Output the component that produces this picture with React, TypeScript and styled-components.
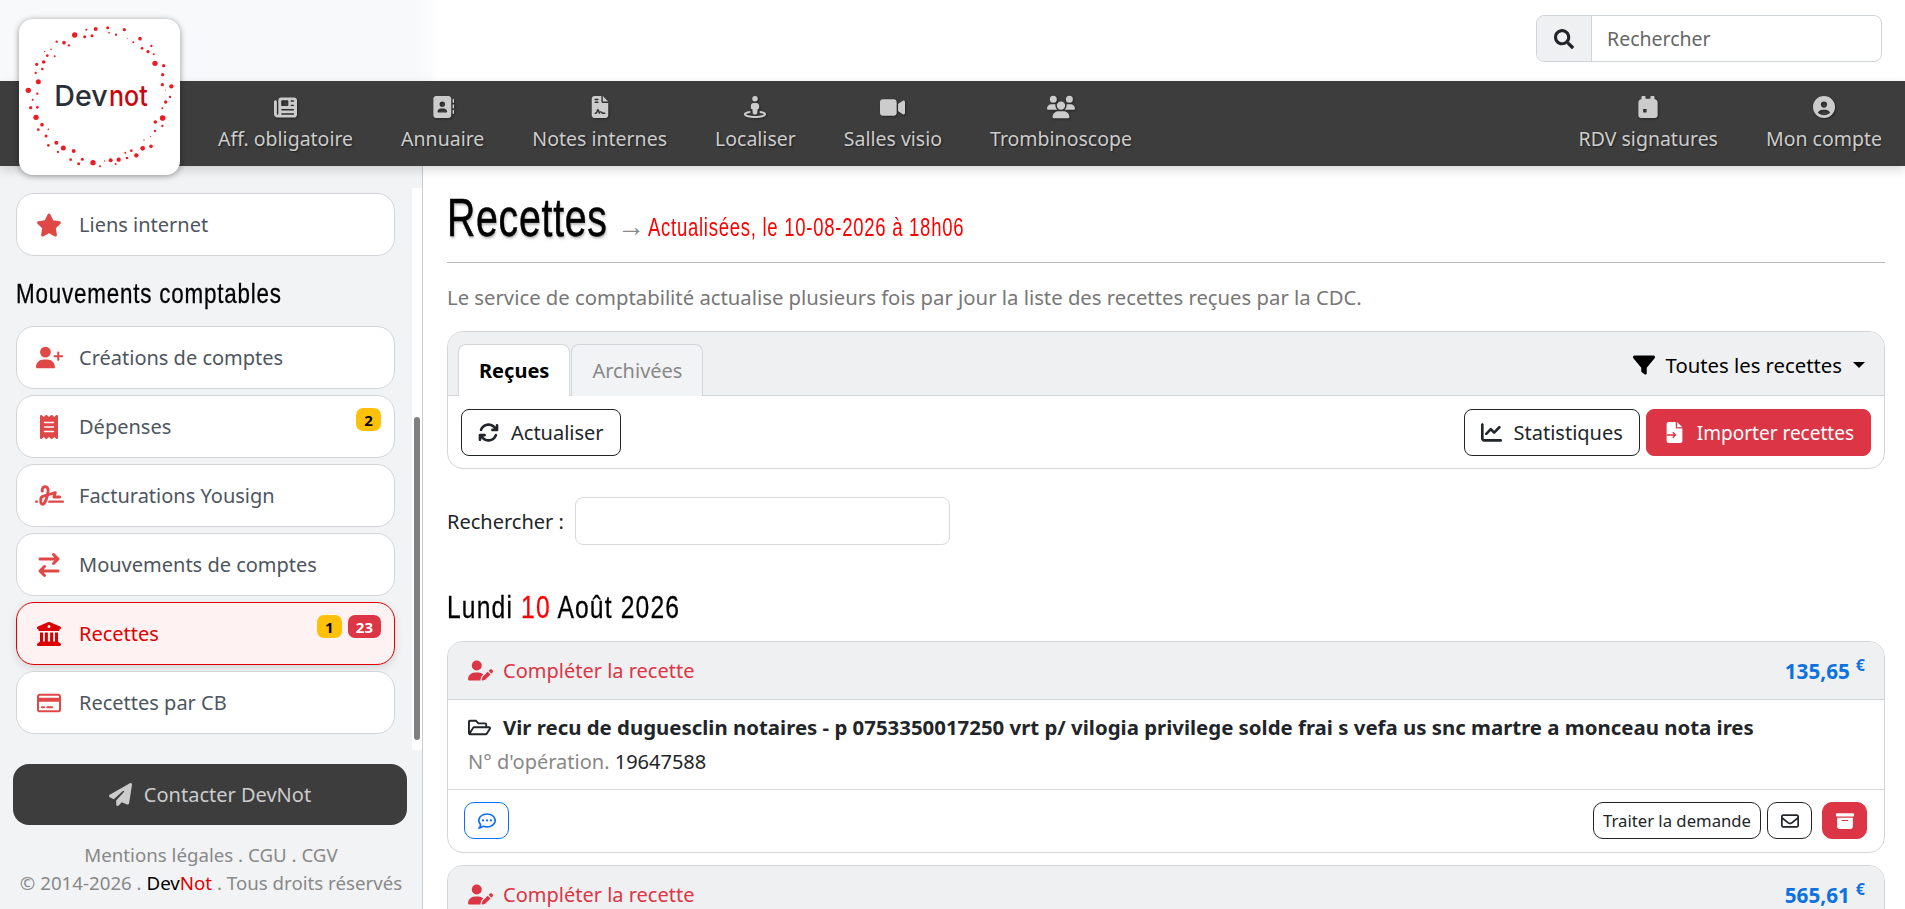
import React from 'react';
import styled, { createGlobalStyle } from 'styled-components';
import { FaRegFolderOpen, FaSearch } from 'react-icons/fa';
import {
  FaAddressBook, FaArrowRightArrowLeft, FaArrowsRotate, FaBoxArchive, FaBuildingColumns, FaChartLine, FaCircleUser,
  FaFileContract, FaFilter, FaNewspaper, FaPaperPlane, FaReceipt, FaRegCommentDots, FaRegCreditCard,
  FaRegEnvelope, FaSignature, FaStar, FaStreetView, FaUserPen, FaUserPlus, FaUsers, FaVideo,
} from 'react-icons/fa6';

const BODY_FONT = `"Noto Sans", "Open Sans", sans-serif`;
// no condensed face is installed: headings are Liberation Sans squeezed with scaleX
const HEAD_FONT = `"Liberation Sans", Arial, sans-serif`;

const GlobalStyle = createGlobalStyle`
  html, body { margin: 0; padding: 0; height: 100%; overflow: hidden; }
  * { box-sizing: border-box; }
  body { font-family: ${BODY_FONT}; font-size: 20px; color: #212529; background: #fff; }
`;

const Page = styled.div`
  position: relative;
  height: 909px;
  overflow: hidden;
  display: flex;
  flex-direction: column;
`;

const TopBar = styled.div`
  height: 81px;
  flex: none;
  display: flex;
  justify-content: flex-end;
  align-items: flex-start;
  padding: 15px 23px 0 0;
  background: linear-gradient(90deg, #f8f9fa 0, #f8f9fa 420px, #fff 440px);
`;

const SearchGroup = styled.div`
  width: 346px;
  height: 47px;
  display: flex;
  border: 1px solid #ced4da;
  border-radius: 8px;
  overflow: hidden;
`;

const SearchAddon = styled.div`
  width: 55px;
  display: flex;
  align-items: center;
  justify-content: center;
  background: #eff0f2;
  border-right: 1px solid #ced4da;
  color: #212529;
  font-size: 20px;
`;

const SearchText = styled.div`
  flex: 1;
  display: flex;
  align-items: center;
  padding-left: 15px;
  font-size: 19.5px;
  color: #666;
`;

const NavBar = styled.nav`
  height: 85px;
  flex: none;
  position: relative;
  z-index: 2;
  display: flex;
  justify-content: space-between;
  padding: 0 23px 0 218px;
  background: #3d3d3d;
  box-shadow: 0 4px 10px rgba(0, 0, 0, 0.15);
`;

const NavGroup = styled.div`
  display: flex;
  gap: 48px;
`;

const NavItem = styled.a`
  display: flex;
  flex-direction: column;
  align-items: center;
  font-size: 19.5px;
  line-height: 27px;
  color: #ccc;
  text-shadow: 1px 1px 2px rgba(0, 0, 0, 0.5);
  white-space: nowrap;
`;

const NavIcon = styled.span`
  height: 22px;
  margin: 15px 0 7px;
  display: flex;
  align-items: center;
  justify-content: center;
  svg { flex: none; filter: drop-shadow(1px 1px 1px rgba(0, 0, 0, 0.4)); }
`;

const LogoBox = styled.div`
  position: absolute;
  z-index: 3;
  left: 19px;
  top: 19px;
  width: 161px;
  height: 156px;
  background: #fff;
  border-radius: 14px;
  box-shadow: 0 1px 6px rgba(0, 0, 0, 0.4);
  svg { display: block; }
`;

const Body = styled.div`
  flex: 1;
  min-height: 0;
  display: flex;
`;

const Sidebar = styled.aside`
  width: 423px;
  flex: none;
  background: #f2f3f5;
  border-right: 1px solid #ccc;
`;

const ScrollArea = styled.div`
  height: 562px;
  margin-top: 22px;
  display: flex;
`;

const SideList = styled.div`
  flex: 1;
  padding: 5px 17px 0 16px;
  display: flex;
  flex-direction: column;
  gap: 6px;
`;

const ScrollTrack = styled.div`
  width: 10px;
  position: relative;
  background: #fff;
`;

const ScrollThumb = styled.div`
  position: absolute;
  left: 2px;
  top: 229px;
  width: 6px;
  height: 323px;
  border-radius: 3px;
  background: #808080;
`;

const SideTitle = styled.h4`
  margin: 12px 0 7px;
  height: 39px;
  line-height: 39px;
  font-family: ${HEAD_FONT};
  font-size: 28px;
  font-weight: 400;
  letter-spacing: 1px;
  color: #000;
  white-space: nowrap;
  transform: scaleX(0.8);
  transform-origin: left;
  -webkit-text-stroke: 0.3px #000;
`;

const SideItem = styled.a<{ $active?: boolean }>`
  position: relative;
  height: 63px;
  flex: none;
  display: flex;
  align-items: center;
  gap: 13px;
  padding-left: 15px;
  border-radius: 18px;
  border: 1px solid ${(p) => (p.$active ? '#dd0000' : '#d3d5d8')};
  background: ${(p) => (p.$active ? '#fff2f2' : '#fff')};
  box-shadow: ${(p) => (p.$active ? '0 3px 8px rgba(0, 0, 0, 0.12)' : 'none')};
  color: ${(p) => (p.$active ? '#dd0000' : '#4d5560')};
`;

const SideIcon = styled.span<{ $active?: boolean }>`
  width: 34px;
  display: flex;
  justify-content: center;
  color: ${(p) => (p.$active ? '#dd0000' : '#e04848')};
`;

const BadgeRow = styled.span`
  position: absolute;
  top: 12px;
  right: 13px;
  display: flex;
  gap: 6px;
`;

const Badge = styled.span<{ $tone: 'warn' | 'danger' }>`
  min-width: 25px;
  height: 23px;
  padding: 0 8px;
  display: flex;
  align-items: center;
  justify-content: center;
  border-radius: 7px;
  font-size: 15px;
  font-weight: 700;
  background: ${(p) => (p.$tone === 'warn' ? '#ffc107' : '#dc3545')};
  color: ${(p) => (p.$tone === 'warn' ? '#000' : '#fff')};
`;

const ContactButton = styled.a`
  height: 61px;
  margin: 14px 15px 0 13px;
  display: flex;
  align-items: center;
  justify-content: center;
  gap: 12px;
  border-radius: 16px;
  background: #3d3d3d;
  color: #ccc;
  svg { font-size: 23px; }
`;

const SideFooter = styled.div`
  margin-top: 16px;
  text-align: center;
  line-height: 28px;
  color: #888;
  font-size: 18.7px;
  white-space: nowrap;
  b { font-weight: 400; color: #000; }
  i { font-style: normal; color: #dd0000; }
`;

const Main = styled.main`
  flex: 1;
  min-width: 0;
  padding: 0 20px 0 24px;
`;

const TitleRow = styled.div`
  height: 97px;
  display: flex;
  align-items: baseline;
  padding-top: 21px;
  border-bottom: 1px solid #bbb;
`;

const Title = styled.h1`
  margin: 0;
  width: 160px;
  font-family: ${HEAD_FONT};
  font-size: 53px;
  font-weight: 400;
  letter-spacing: 1px;
  color: #000;
  white-space: nowrap;
  transform: scaleX(0.74);
  transform-origin: left;
  -webkit-text-stroke: 0.5px #000;
  text-shadow: 1px 2px 3px rgba(0, 0, 0, 0.3);
`;

const TitleArrow = styled.span`
  margin-left: 10px;
  width: 31px;
  font-size: 28px;
  line-height: 1;
  color: #888;
`;

const TitleNote = styled.small`
  font-family: ${HEAD_FONT};
  font-size: 25px;
  letter-spacing: 1px;
  color: #f00;
  white-space: nowrap;
  transform: scaleX(0.74);
  transform-origin: left;
`;

const Intro = styled.p`
  margin: 21px 0 0;
  line-height: 26px;
  font-size: 20.3px;
  color: #777;
  white-space: nowrap;
`;

const Panel = styled.section`
  margin-top: 21px;
  height: 138px;
  border: 1px solid #d3d5d8;
  border-radius: 16px;
  overflow: hidden;
`;

const PanelHead = styled.div`
  height: 64px;
  display: flex;
  justify-content: space-between;
  padding: 12px 19px 0 10px;
  background: #eff0f2;
  border-bottom: 1px solid #d3d5d8;
`;

const Tabs = styled.div`
  display: flex;
  gap: 1px;
`;

const Tab = styled.a<{ $active?: boolean }>`
  height: 52px;
  display: flex;
  align-items: center;
  padding: 0 20px;
  border: 1px solid #d3d5d8;
  border-bottom: 0;
  border-radius: 8px 8px 0 0;
  background: ${(p) => (p.$active ? '#fff' : '#f2f3f5')};
  color: ${(p) => (p.$active ? '#000' : '#888')};
  font-weight: ${(p) => (p.$active ? 700 : 400)};
`;

const FilterMenu = styled.div`
  display: flex;
  align-items: center;
  gap: 11px;
  height: 43px;
  margin-top: -1px;
  font-size: 20.3px;
  color: #000;
  svg { font-size: 22px; }
`;

const Caret = styled.span`
  width: 0;
  height: 0;
  border-left: 6px solid transparent;
  border-right: 6px solid transparent;
  border-top: 6px solid #000;
`;

const PanelBody = styled.div`
  height: 72px;
  display: flex;
  justify-content: space-between;
  padding: 13px 13px 0 13px;
`;

const ButtonGroup = styled.div`
  display: flex;
  gap: 6px;
`;

const Button = styled.a<{ $tone?: 'outline' | 'danger'; $small?: boolean; $info?: boolean; $square?: boolean }>`
  height: ${(p) => (p.$small ? 37 : 47)}px;
  width: ${(p) => (p.$square ? '45px' : 'auto')};
  display: flex;
  align-items: center;
  justify-content: center;
  gap: 12px;
  padding: 0 ${(p) => (p.$square ? 0 : p.$small ? 9 : 16)}px;
  border-radius: ${(p) => (p.$small ? 10 : 8)}px;
  border: 1px solid ${(p) => (p.$tone === 'danger' ? '#dc3545' : p.$info ? '#0d6efd' : '#212529')};
  background: ${(p) => (p.$tone === 'danger' ? '#dc3545' : '#fff')};
  color: ${(p) => (p.$tone === 'danger' ? '#fff' : p.$info ? '#0d6efd' : '#212529')};
  font-size: ${(p) => (p.$small ? 16.7 : 20)}px;
  white-space: nowrap;
  svg { font-size: ${(p) => (p.$small ? 18 : 21)}px; }
`;

const ImportButton = styled(Button)`
  gap: 14px;
  padding-left: 19px;
  font-size: 19px;
`;

const SearchRow = styled.div`
  margin-top: 28px;
  display: flex;
  align-items: center;
  gap: 11px;
`;

const SearchBox = styled.div`
  width: 375px;
  height: 48px;
  border: 1px solid #d8dade;
  border-radius: 8px;
`;

const DateHeading = styled.h3`
  margin: 40px 0 0;
  height: 44px;
  line-height: 44px;
  font-family: ${HEAD_FONT};
  font-size: 32px;
  font-weight: 400;
  letter-spacing: 1.5px;
  color: #000;
  white-space: nowrap;
  transform: scaleX(0.77);
  transform-origin: left;
  -webkit-text-stroke: 0.3px #000;
  span { color: #f00; -webkit-text-stroke: 0.3px #f00; }
`;

const CardList = styled.div`
  margin-top: 12px;
  display: flex;
  flex-direction: column;
  gap: 12px;
`;

const Card = styled.article`
  border: 1px solid #d3d5d8;
  border-radius: 16px;
  overflow: hidden;
`;

const CardHead = styled.header`
  height: 58px;
  display: flex;
  justify-content: space-between;
  align-items: center;
  padding: 0 19px 0 20px;
  background: #eff0f2;
  border-bottom: 1px solid #d3d5d8;
`;

const CardStatus = styled.span`
  display: flex;
  align-items: center;
  gap: 10px;
  color: #dc3545;
  svg { font-size: 25px; }
`;

const Amount = styled.span`
  font-weight: 700;
  font-size: 20.7px;
  color: #0b72e0;
  sup { font-size: 16px; line-height: 0; margin-left: 6px; }
`;

const CardBody = styled.div`
  height: 90px;
  padding: 10px 20px 0;
  border-bottom: 1px solid #d8dade;
`;

const CardLabel = styled.div`
  display: flex;
  align-items: center;
  gap: 12px;
  height: 34px;
  font-size: 20.4px;
  font-weight: 700;
  color: #212529;
  white-space: nowrap;
  svg { font-size: 23px; }
`;

const OperationLine = styled.div`
  height: 34px;
  margin-top: 1px;
  line-height: 34px;
  color: #888;
  strong { font-weight: 400; color: #212529; }
`;

const CardFoot = styled.footer`
  height: 62px;
  display: flex;
  justify-content: space-between;
  padding: 12px 17px 0 16px;
`;

const FootActions = styled.div`
  display: flex;
  gap: 6px;
  > :last-child { margin-left: 4px; }
`;

// solid calendar with the two rings and a small square at the lower left
const CalendarIcon = ({ size }: { size: number }) => (
  <svg viewBox="0 0 448 512" width={size} height={size} fill="currentColor">
    <path
      fillRule="evenodd"
      d="M96 0h48c13 0 24 11 24 24v40h112V24c0-13 11-24 24-24h48c13 0 24 11 24 24v46c40 6 72 40 72 82v296c0 35-29 64-64 64H64c-35 0-64-29-64-64V152c0-42 32-76 72-82V24C72 11 83 0 96 0zM112 304v80h80v-80z"
    />
  </svg>
);

// page with a folded corner and an arrow cut through it
const ImportIcon = () => (
  <svg viewBox="0 0 384 512" width="17" height="21" fill="currentColor">
    <path d="M48 0h176v128c0 18 14 32 32 32h128v304c0 26-22 48-48 48H48c-26 0-48-22-48-48V48C0 22 22 0 48 0zM256 0l128 128H256z" />
    <path d="M0 316h210M150 250l66 66-66 66" fill="none" stroke="#dc3545" strokeWidth="34" />
  </svg>
);

const navLeft = [
  { icon: FaNewspaper, size: 23, label: 'Aff. obligatoire' },
  { icon: FaAddressBook, size: 22, label: 'Annuaire' },
  { icon: FaFileContract, size: 22, label: 'Notes internes' },
  { icon: FaStreetView, size: 22, label: 'Localiser' },
  { icon: FaVideo, size: 25, label: 'Salles visio' },
  { icon: FaUsers, size: 28, label: 'Trombinoscope' },
];

const navRight = [
  { icon: CalendarIcon, size: 22, label: 'RDV signatures' },
  { icon: FaCircleUser, size: 22, label: 'Mon compte' },
];

const sideItems = [
  { icon: FaUserPlus, size: 27, label: 'Créations de comptes' },
  { icon: FaReceipt, size: 24, label: 'Dépenses', warn: '2' },
  { icon: FaSignature, size: 29, label: 'Facturations Yousign' },
  { icon: FaArrowRightArrowLeft, size: 24, label: 'Mouvements de comptes' },
  { icon: FaBuildingColumns, size: 24, label: 'Recettes', warn: '1', danger: '23', active: true },
  { icon: FaRegCreditCard, size: 24, label: 'Recettes par CB' },
];

// dots of the logo ring: x, y, radius
const logoDots = [
  [224, 105, 8], [254, 110, 4.5], [276, 107, 4.5], [287, 87, 6], [259, 89, 3], [323, 83, 4.5], [327, 98, 2.5], [348, 104, 3.5],
  [373, 89, 5], [383, 115, 1.5], [400, 127, 3], [420, 116, 5.5], [426, 145, 4], [444, 155, 5], [454, 138, 3.5], [461, 163, 3],
  [465, 190, 8], [491, 197, 5], [488, 224, 5], [487, 254, 5], [514, 259, 6.5], [496, 270, 1.5], [510, 291, 3.5], [497, 306, 5],
  [487, 325, 3], [488, 354, 8.5], [466, 366, 5.5], [487, 378, 3.5], [465, 393, 3.5], [452, 409, 2], [432, 420, 2], [453, 439, 5.5],
  [428, 445, 7], [409, 466, 6.5], [394, 452, 4], [376, 458, 3], [381, 474, 4], [356, 479, 6.5], [332, 481, 6], [347, 492, 3],
  [314, 483, 2], [300, 499, 3], [279, 488, 8], [247, 478, 4.5], [236, 491, 4.5], [212, 479, 4], [221, 453, 6], [190, 444, 7.5],
  [174, 456, 3.5], [169, 428, 6], [145, 436, 4], [138, 408, 4.5], [115, 389, 4], [145, 388, 2.5], [126, 374, 5.5], [108, 352, 8],
  [92, 323, 5], [112, 322, 4], [98, 299, 3], [112, 281, 3.5], [85, 271, 8], [115, 245, 7.5], [107, 219, 3.5], [127, 207, 4],
  [110, 193, 5], [131, 186, 5.5], [142, 167, 4], [164, 169, 3], [153, 148, 2.5], [134, 155, 2], [170, 125, 3.5], [192, 128, 5.5],
  [207, 136, 3.5],
];

const Logo = () => (
  <svg viewBox="57 57 483 468" width="161" height="156">
    {logoDots.map(([x, y, r], i) => (
      <circle key={i} cx={x} cy={y} r={r} fill="#ed1c24" />
    ))}
    <text x="163" y="318" fontFamily="Inter, sans-serif" fontWeight="500" fontSize="86" fill="#2b2f3a" textLength="160" lengthAdjust="spacingAndGlyphs">Dev</text>
    <text x="327" y="318" fontFamily="Inter, sans-serif" fontWeight="500" fontSize="86" fill="#c9060f" textLength="116" lengthAdjust="spacingAndGlyphs">not</text>
  </svg>
);

export default function App() {
  return (
    <Page>
      <GlobalStyle />
      <LogoBox><Logo /></LogoBox>
      <TopBar>
        <SearchGroup>
          <SearchAddon><FaSearch /></SearchAddon>
          <SearchText>Rechercher</SearchText>
        </SearchGroup>
      </TopBar>
      <NavBar>
        <NavGroup>
          {navLeft.map((n) => (
            <NavItem key={n.label}><NavIcon><n.icon size={n.size} /></NavIcon>{n.label}</NavItem>
          ))}
        </NavGroup>
        <NavGroup>
          {navRight.map((n) => (
            <NavItem key={n.label}><NavIcon><n.icon size={n.size} /></NavIcon>{n.label}</NavItem>
          ))}
        </NavGroup>
      </NavBar>
      <Body>
        <Sidebar>
          <ScrollArea>
            <SideList>
              <SideItem>
                <SideIcon><FaStar size={26} /></SideIcon>Liens internet
              </SideItem>
              <SideTitle>Mouvements comptables</SideTitle>
              {sideItems.map((s) => (
                <SideItem key={s.label} $active={s.active}>
                  <SideIcon $active={s.active}><s.icon size={s.size} /></SideIcon>
                  {s.label}
                  {(s.warn || s.danger) && (
                    <BadgeRow>
                      {s.warn && <Badge $tone="warn">{s.warn}</Badge>}
                      {s.danger && <Badge $tone="danger">{s.danger}</Badge>}
                    </BadgeRow>
                  )}
                </SideItem>
              ))}
            </SideList>
            <ScrollTrack><ScrollThumb /></ScrollTrack>
          </ScrollArea>
          <ContactButton><FaPaperPlane />Contacter DevNot</ContactButton>
          <SideFooter>
            Mentions légales . CGU . CGV<br />
            © 2014-2026 . <b>Dev</b><i>Not</i> . Tous droits réservés
          </SideFooter>
        </Sidebar>
        <Main>
          <TitleRow>
            <Title>Recettes</Title>
            <TitleArrow>→</TitleArrow>
            <TitleNote>Actualisées, le 10-08-2026 à 18h06</TitleNote>
          </TitleRow>
          <Intro>Le service de comptabilité actualise plusieurs fois par jour la liste des recettes reçues par la CDC.</Intro>
          <Panel>
            <PanelHead>
              <Tabs>
                <Tab $active>Reçues</Tab>
                <Tab>Archivées</Tab>
              </Tabs>
              <FilterMenu><FaFilter />Toutes les recettes<Caret /></FilterMenu>
            </PanelHead>
            <PanelBody>
              <Button $tone="outline"><FaArrowsRotate />Actualiser</Button>
              <ButtonGroup>
                <Button $tone="outline"><FaChartLine />Statistiques</Button>
                <ImportButton $tone="danger"><ImportIcon />Importer recettes</ImportButton>
              </ButtonGroup>
            </PanelBody>
          </Panel>
          <SearchRow>
            Rechercher :
            <SearchBox />
          </SearchRow>
          <DateHeading>Lundi <span>10</span> Août 2026</DateHeading>
          <CardList>
            <Card>
              <CardHead>
                <CardStatus><FaUserPen />Compléter la recette</CardStatus>
                <Amount>135,65<sup>€</sup></Amount>
              </CardHead>
              <CardBody>
                <CardLabel>
                  <FaRegFolderOpen />
                  Vir recu de duguesclin notaires - p 0753350017250 vrt p/ vilogia privilege solde frai s vefa us snc martre a monceau nota ires
                </CardLabel>
                <OperationLine>N° d'opération. <strong>19647588</strong></OperationLine>
              </CardBody>
              <CardFoot>
                <Button $small $info $square><FaRegCommentDots /></Button>
                <FootActions>
                  <Button $small $tone="outline">Traiter la demande</Button>
                  <Button $small $square $tone="outline"><FaRegEnvelope /></Button>
                  <Button $small $square $tone="danger"><FaBoxArchive /></Button>
                </FootActions>
              </CardFoot>
            </Card>
            <Card>
              <CardHead>
                <CardStatus><FaUserPen />Compléter la recette</CardStatus>
                <Amount>565,61<sup>€</sup></Amount>
              </CardHead>
            </Card>
          </CardList>
        </Main>
      </Body>
    </Page>
  );
}
